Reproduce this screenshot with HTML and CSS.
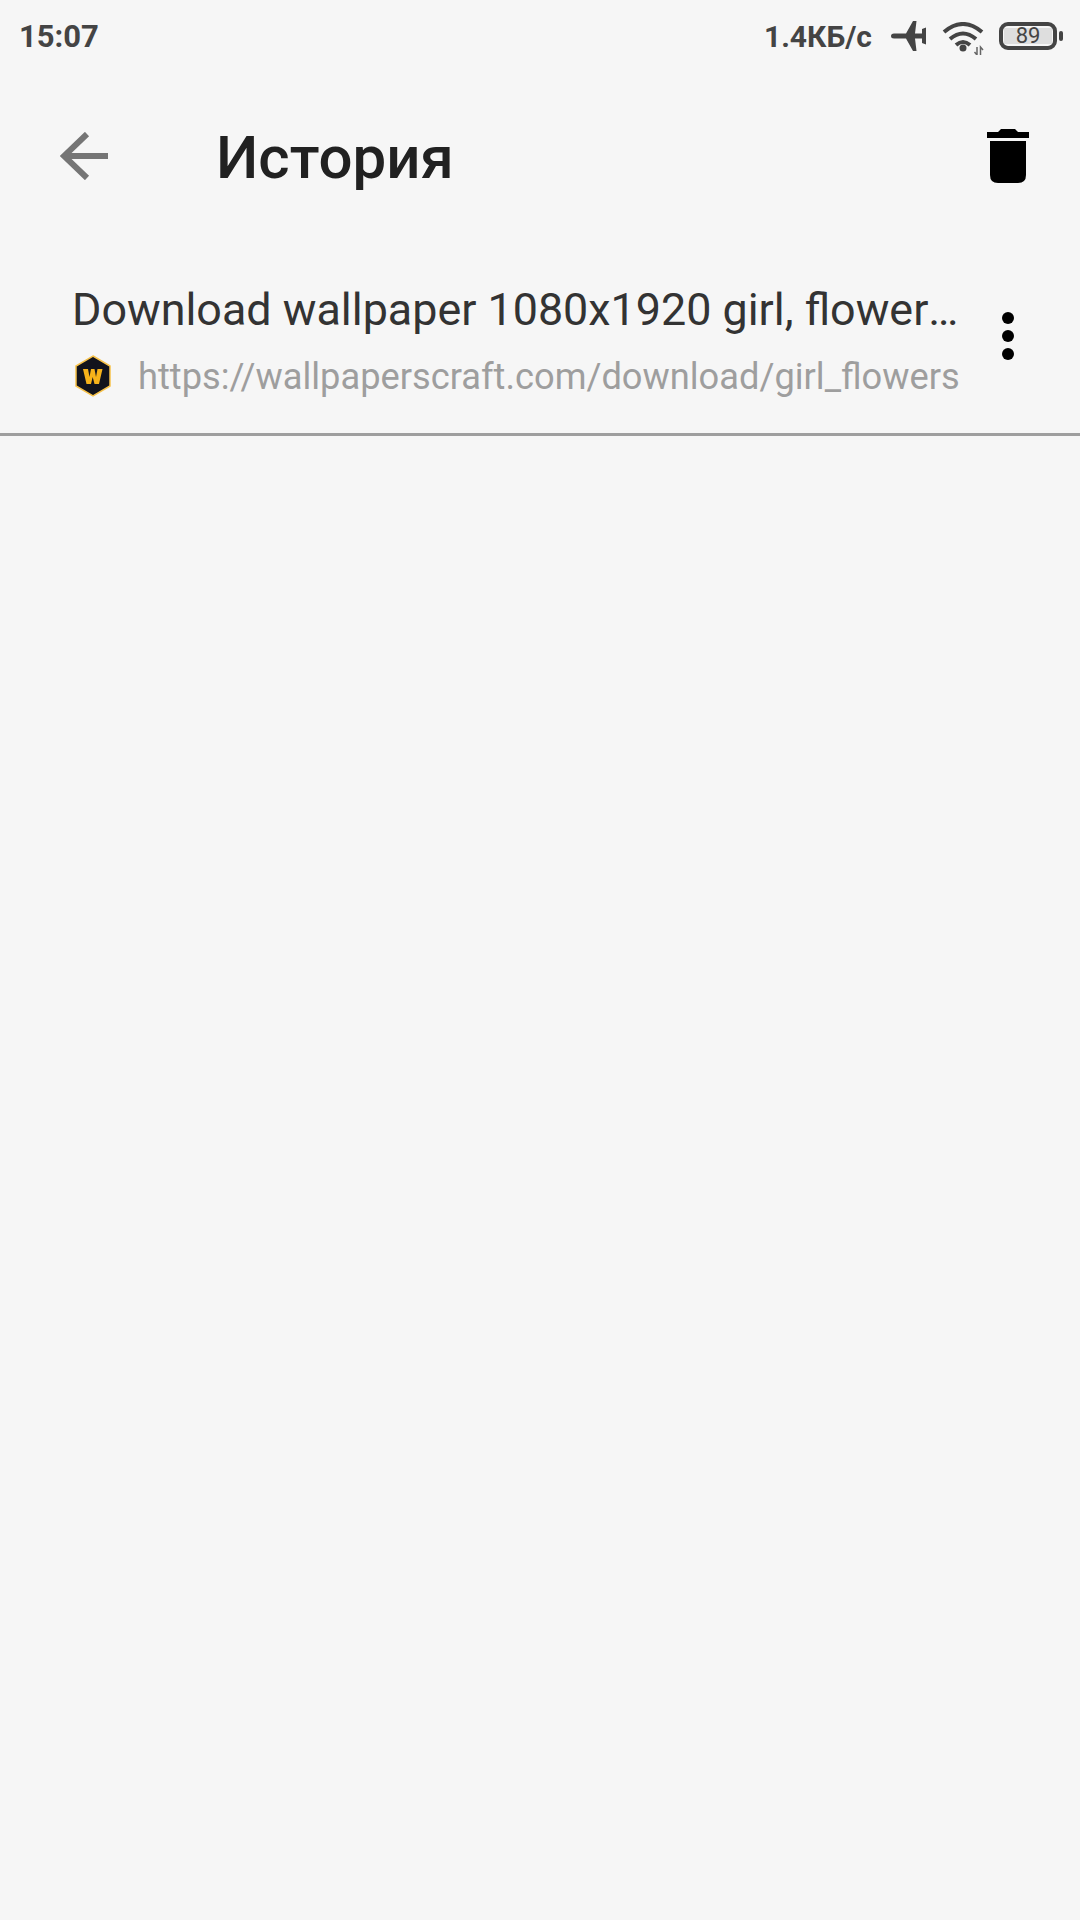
FILE: index.html
```html
<!DOCTYPE html>
<html lang="ru">
  <head>
    <meta charset="UTF-8" />
    <meta name="viewport" content="width=device-width, initial-scale=1.0" />
    <title>История</title>
    <link rel="stylesheet" href="styles.css">
  </head>

  <body>
    <div class="status-bar">
      <span class="clock">15:07</span>
      <div class="status-icons">
        <span class="speed">1.4КБ/с</span>
        <svg class="plane" viewBox="0 0 35 30" width="35" height="30">
          <path d="M0 15 Q0 12.500 3 12.500 H15 L22 0 H25.500 L24 12.500 H31 V8 L35 6.500 V23.500 L31 22 V17.500 H24 L25.500 30 H22 L15 17.500 H3 Q0 17.500 0 15 Z" fill="#444" />
        </svg>
        <svg class="wifi" viewBox="0 0 42 33" width="42" height="33">
          <path d="M2 10 Q21 -6 40 10" fill="none" stroke="#444" stroke-width="4" />
          <path d="M8 17 Q21 6 34 17" fill="none" stroke="#444" stroke-width="4" />
          <path d="M14 23 Q21 17 28 23" fill="none" stroke="#444" stroke-width="4" />
          <circle cx="21" cy="26" r="3.500" fill="#444" />
          <path d="M35 25 V33 M32.500 30 L35 33 M38.500 33 V25 L41 28" fill="none" stroke="#666" stroke-width="1.500" />
        </svg>
        <div class="battery">
          <div class="battery-body"><span class="battery-level">89</span></div>
          <div class="battery-tip"></div>
        </div>
      </div>
    </div>

    <div class="toolbar">
      <svg class="back" viewBox="0 0 48 48" width="48" height="48">
        <path d="M27 2 L4 24 L27 46 M4 24 H49" fill="none" stroke="#757575" stroke-width="6" />
      </svg>
      <h1 class="title">История</h1>
      <svg class="trash" viewBox="0 0 42 54" width="42" height="54">
        <path d="M0 3 H11 L14 0 H28 L31 3 H42 V9 H0 Z M3 12 H39 V46 Q39 54 31 54 H11 Q3 54 3 46 Z" fill="#000" />
      </svg>
    </div>

    <div class="history-item">
      <div class="item-text">
        <div class="item-title">Download wallpaper 1080x1920 girl, flowers, spring</div>
        <div class="item-url-row">
          <svg class="favicon" viewBox="0 0 38 42" width="38" height="42">
            <path d="M19 1 L36 11 V31 L19 41 L2 31 V11 Z" fill="#12131c" stroke="#f7c24a" stroke-width="1.500" />
            <path d="M9 14 H14 L15.500 22 L17 14 H20.500 L22 22 L23.500 14 H28.500 L25 29 H20.500 L18.700 22 L17 29 H12.500 Z" fill="#f6b21a" />
          </svg>
          <span class="item-url">https://wallpaperscraft.com/download/girl_flowers</span>
        </div>
      </div>
      <div class="item-menu">
        <span class="dot"></span>
        <span class="dot"></span>
        <span class="dot"></span>
      </div>
    </div>
  </body>
</html>
```

FILE: styles.css
```css
* {
  box-sizing: border-box;
}

body {
  font-family: Roboto, Arial, sans-serif;
  margin: 0;
  width: 1080px;
  height: 1920px;
  overflow: hidden;
  background-color: #f6f6f6;
}

.status-bar {
  display: flex;
  align-items: center;
  justify-content: space-between;
  height: 72px;
  padding: 0 17px 0 19px;
  color: #444;
}

.clock {
  font-size: 31px;
  font-weight: 700;
}

.speed {
  font-size: 30px;
  font-weight: 700;
}

.status-icons {
  display: flex;
  align-items: center;
}

.plane {
  margin-left: 19px;
}

.wifi {
  margin-left: 16px;
  margin-top: 5px;
}

.battery {
  display: flex;
  align-items: center;
  margin-left: 15px;
}

.battery-body {
  display: flex;
  align-items: center;
  justify-content: center;
  width: 58px;
  height: 28px;
  border: 4px solid #444;
  border-radius: 9px;
  padding: 2px 1px;
}

.battery-level {
  flex: 1;
  height: 100%;
  background-color: #dedede;
  font-size: 22px;
  line-height: 16px;
  text-align: center;
  color: #444;
}

.battery-tip {
  width: 4px;
  height: 10px;
  margin-left: 2px;
  background-color: #444;
  border-radius: 2px;
}

.toolbar {
  display: flex;
  align-items: center;
  height: 168px;
  padding: 0 51px 0 60px;
}

.title {
  flex: 1;
  margin: 2px 0 0 108px;
  font-size: 60px;
  font-weight: 500;
  color: #212121;
}

.history-item {
  display: flex;
  align-items: center;
  height: 196px;
  border-bottom: 3px solid #9e9e9e;
  padding: 0 66px 0 72px;
}

.item-text {
  flex: 1;
  min-width: 0;
  padding-top: 7px;
}

.item-title {
  width: 888px;
  font-size: 44.85px;
  color: #333;
  white-space: nowrap;
  overflow: hidden;
  text-overflow: ellipsis;
}

.item-url-row {
  display: flex;
  align-items: center;
  margin-top: 19px;
}

.favicon {
  flex-shrink: 0;
  margin-left: 2px;
}

.item-url {
  margin-left: 26px;
  font-size: 36.25px;
  color: #9e9e9e;
  white-space: nowrap;
}

.item-menu {
  display: flex;
  flex-direction: column;
  gap: 6px;
  margin-top: -2px;
}

.dot {
  width: 12px;
  height: 12px;
  border-radius: 50%;
  background-color: #000;
}
```
